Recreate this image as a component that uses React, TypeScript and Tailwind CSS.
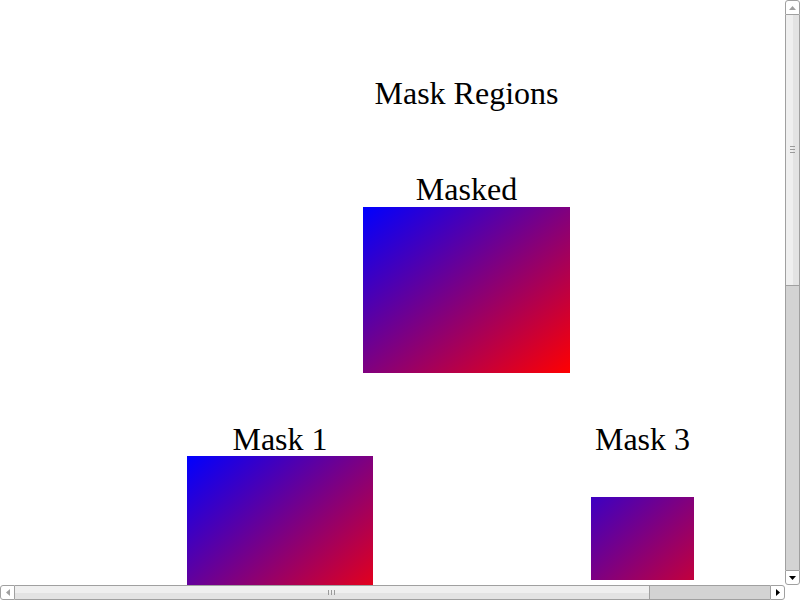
import React from 'react';

const serif = { fontFamily: '"Liberation Serif", "Times New Roman", serif' };

const ArrowUp = ({ color }: { color: string }) => (
  <svg width="7" height="4" viewBox="0 0 7 4">
    <path d="M0 4 L3.5 0 L7 4 Z" fill={color} />
  </svg>
);

const ArrowDown = ({ color }: { color: string }) => (
  <svg width="7" height="4" viewBox="0 0 7 4">
    <path d="M0 0 L7 0 L3.5 4 Z" fill={color} />
  </svg>
);

const ArrowLeft = ({ color }: { color: string }) => (
  <svg width="4" height="7" viewBox="0 0 4 7">
    <path d="M4 0 L4 7 L0 3.5 Z" fill={color} />
  </svg>
);

const ArrowRight = ({ color }: { color: string }) => (
  <svg width="4" height="7" viewBox="0 0 4 7">
    <path d="M0 0 L4 3.5 L0 7 Z" fill={color} />
  </svg>
);

const VScrollbar: React.FC = () => (
  <div className="flex flex-col w-[15px] h-[585px] bg-white">
    <div className="h-[15px] flex items-center justify-center border border-[#a0a0a0] rounded-t-[3px] bg-white">
      <ArrowUp color="#a0a0a0" />
    </div>
    <div className="h-[270px] flex border-x border-[#a0a0a0] relative">
      <div className="w-[7px] bg-[#efefef]" />
      <div className="flex-1 bg-[#e3e3e3]" />
      <div className="absolute top-[131px] left-[4px] flex flex-col gap-[2px]">
        <div className="w-[5px] h-px bg-[#9a9a9a]" />
        <div className="w-[5px] h-px bg-[#9a9a9a]" />
        <div className="w-[5px] h-px bg-[#9a9a9a]" />
      </div>
    </div>
    <div className="flex-1 bg-[#d3d3d3] border-x border-t border-[#a0a0a0]" />
    <div className="h-[15px] flex items-center justify-center border border-[#a0a0a0] rounded-b-[3px] bg-white">
      <ArrowDown color="#000000" />
    </div>
  </div>
);

const HScrollbar: React.FC = () => (
  <div className="flex w-[785px] h-[15px] bg-white">
    <div className="w-[15px] flex items-center justify-center border border-[#a0a0a0] rounded-l-[3px] bg-white">
      <ArrowLeft color="#a0a0a0" />
    </div>
    <div className="w-[634px] flex flex-col border-y border-[#a0a0a0] relative">
      <div className="h-[7px] bg-[#efefef]" />
      <div className="flex-1 bg-[#e3e3e3]" />
      <div className="absolute left-[313px] top-[4px] flex gap-[2px]">
        <div className="w-px h-[5px] bg-[#9a9a9a]" />
        <div className="w-px h-[5px] bg-[#9a9a9a]" />
        <div className="w-px h-[5px] bg-[#9a9a9a]" />
      </div>
    </div>
    <div className="flex-1 bg-[#d3d3d3] border-y border-[#a0a0a0] border-l" />
    <div className="w-[15px] flex items-center justify-center border border-[#a0a0a0] rounded-r-[3px] bg-white">
      <ArrowRight color="#000000" />
    </div>
  </div>
);

const Label: React.FC<{ children: React.ReactNode }> = ({ children }) => (
  <div className="text-[32px] leading-[32px] text-black whitespace-nowrap" style={serif}>
    {children}
  </div>
);

export default function App() {
  return (
    <div className="w-[800px] h-[600px] bg-white overflow-hidden flex flex-col">
      <div className="flex h-[585px]">
        <div className="w-[785px] h-[585px] overflow-hidden flex flex-col">
          <div className="ml-[363px] w-[207px] flex flex-col items-center">
            <div className="mt-[77px]">
              <Label>Mask Regions</Label>
            </div>
            <div className="mt-[64px]">
              <Label>Masked</Label>
            </div>
            <div className="mt-[2px] w-[207px] h-[166px] shrink-0 bg-[linear-gradient(to_bottom_right,#0000ff,#ff0000)]" />
          </div>
          <div className="flex mt-[50px]">
            <div className="ml-[187px] w-[186px] flex flex-col items-center">
              <Label>Mask 1</Label>
              <div className="mt-px w-[186px] h-[166px] shrink-0 bg-[linear-gradient(to_bottom_right,#0000ff,#ff0000)]" />
            </div>
            <div className="ml-[218px] w-[103px] flex flex-col items-center">
              <Label>Mask 3</Label>
              <div className="mt-[42px] w-[103px] h-[83px] shrink-0 bg-[linear-gradient(to_bottom_right,#0000ff,#ff0000)] bg-[length:186px_166px] bg-[position:-41px_-42px] bg-no-repeat" />
            </div>
          </div>
        </div>
        <VScrollbar />
      </div>
      <div className="flex">
        <HScrollbar />
        <div className="w-[15px] h-[15px] bg-white" />
      </div>
    </div>
  );
}
